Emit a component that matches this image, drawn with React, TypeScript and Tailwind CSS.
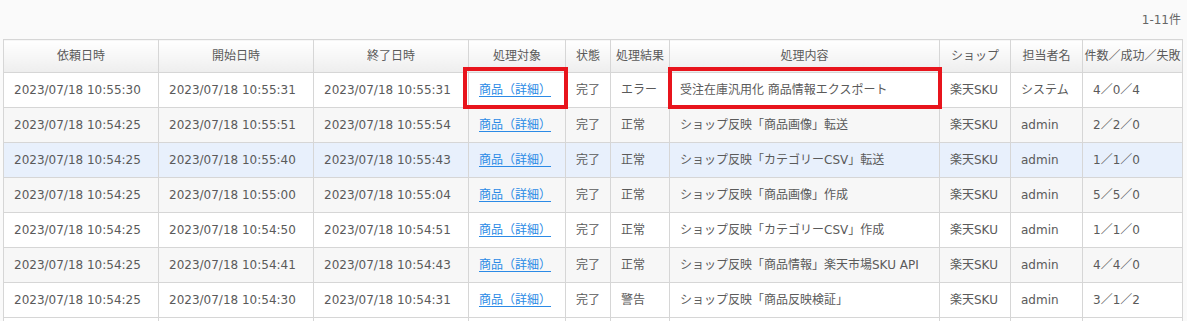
import React from 'react';

type Row = {
  requested: string;
  started: string;
  finished: string;
  status: string;
  result: string;
  content: string;
  shop: string;
  user: string;
  counts: string;
  marked?: boolean;
  active?: boolean;
};

const rows: Row[] = [
  { requested: '2023/07/18 10:55:30', started: '2023/07/18 10:55:31', finished: '2023/07/18 10:55:31', status: '完了', result: 'エラー', content: '受注在庫汎用化 商品情報エクスポート', shop: '楽天SKU', user: 'システム', counts: '4／0／4', marked: true },
  { requested: '2023/07/18 10:54:25', started: '2023/07/18 10:55:51', finished: '2023/07/18 10:55:54', status: '完了', result: '正常', content: 'ショップ反映「商品画像」転送', shop: '楽天SKU', user: 'admin', counts: '2／2／0' },
  { requested: '2023/07/18 10:54:25', started: '2023/07/18 10:55:40', finished: '2023/07/18 10:55:43', status: '完了', result: '正常', content: 'ショップ反映「カテゴリーCSV」転送', shop: '楽天SKU', user: 'admin', counts: '1／1／0', active: true },
  { requested: '2023/07/18 10:54:25', started: '2023/07/18 10:55:00', finished: '2023/07/18 10:55:04', status: '完了', result: '正常', content: 'ショップ反映「商品画像」作成', shop: '楽天SKU', user: 'admin', counts: '5／5／0' },
  { requested: '2023/07/18 10:54:25', started: '2023/07/18 10:54:50', finished: '2023/07/18 10:54:51', status: '完了', result: '正常', content: 'ショップ反映「カテゴリーCSV」作成', shop: '楽天SKU', user: 'admin', counts: '1／1／0' },
  { requested: '2023/07/18 10:54:25', started: '2023/07/18 10:54:41', finished: '2023/07/18 10:54:43', status: '完了', result: '正常', content: 'ショップ反映「商品情報」楽天市場SKU API', shop: '楽天SKU', user: 'admin', counts: '4／4／0' },
  { requested: '2023/07/18 10:54:25', started: '2023/07/18 10:54:30', finished: '2023/07/18 10:54:31', status: '完了', result: '警告', content: 'ショップ反映「商品反映検証」', shop: '楽天SKU', user: 'admin', counts: '3／1／2' },
];

const headers = ['依頼日時', '開始日時', '終了日時', '処理対象', '状態', '処理結果', '処理内容', 'ショップ', '担当者名', '件数／成功／失敗'];
const widths = [155, 155, 155, 97, 45, 59, 270, 71, 72, 100];

export default function App() {
  const td = 'border border-[#d6d6d6] h-[35px] pl-[10px] pr-1 whitespace-nowrap overflow-visible';

  return (
    <div
      className="h-[321px] bg-[#fafafa] text-[12px] text-[#5a5a5a] overflow-hidden"
      style={{ fontFamily: '"DejaVu Sans", "Noto Sans CJK JP", sans-serif' }}
    >
      <div className="h-[39px] flex items-center justify-end pr-[6px] text-[12px] text-[#666]">1-11件</div>
      <table className="ml-[3px] w-[1179px] table-fixed border-collapse">
        <colgroup>
          {widths.map((w, i) => (
            <col key={i} style={{ width: w }} />
          ))}
        </colgroup>
        <thead>
          <tr>
            {headers.map((h) => (
              <th
                key={h}
                className="border border-[#d6d6d6] h-[33px] font-normal text-center whitespace-nowrap px-0 bg-gradient-to-b from-white to-[#eeeeee]"
              >
                {h}
              </th>
            ))}
          </tr>
        </thead>
        <tbody>
          {rows.map((r, i) => (
            <tr key={i} className={r.active ? 'bg-[#e8f0fc]' : i % 2 === 0 ? 'bg-white' : 'bg-[#f7f7f7]'}>
              <td className={td}>{r.requested}</td>
              <td className={td}>{r.started}</td>
              <td className={td}>{r.finished}</td>
              <td className={`${td} relative`}>
                <a href="#" className="text-[#2b8ae6] underline underline-offset-2">商品（詳細）</a>
                {r.marked && (
                  <div className="absolute left-[-6px] right-[-3px] top-[-6px] bottom-[-2px] border-4 border-[#e8141c] pointer-events-none" />
                )}
              </td>
              <td className={`${td} pl-[9px]`}>{r.status}</td>
              <td className={td}>{r.result}</td>
              <td className={`${td} relative`}>
                {r.content}
                {r.marked && (
                  <div className="absolute left-[-2px] right-[-3px] top-[-6px] bottom-[-2px] border-4 border-[#e8141c] pointer-events-none" />
                )}
              </td>
              <td className={td}>{r.shop}</td>
              <td className={td}>{r.user}</td>
              <td className={td}>{r.counts}</td>
            </tr>
          ))}
          <tr className="bg-white">
            {widths.map((_, i) => (
              <td key={i} className={td} />
            ))}
          </tr>
        </tbody>
      </table>
    </div>
  );
}
